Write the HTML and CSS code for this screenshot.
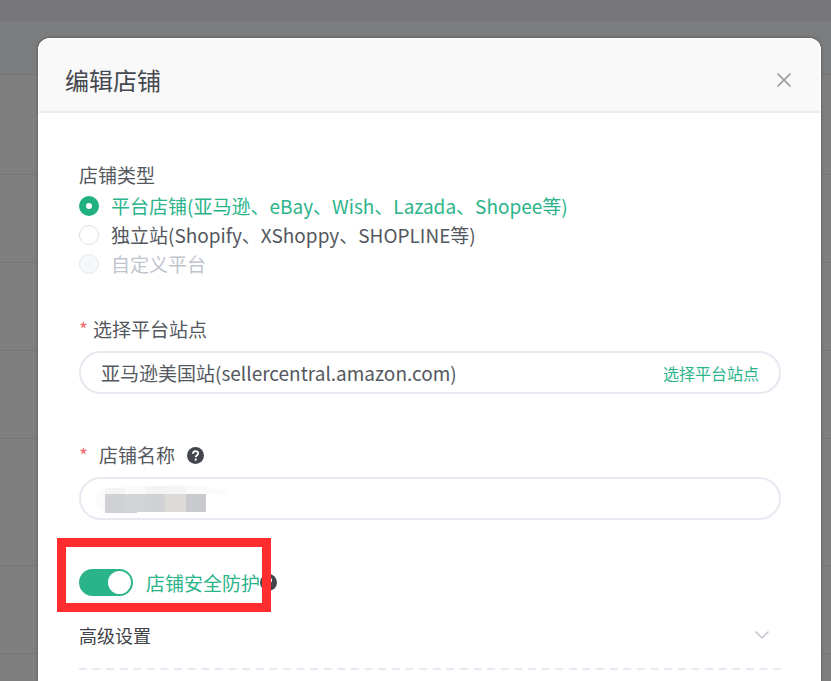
FILE: index.html
```html
<!DOCTYPE html>
<html lang="zh-CN">
<head>
    <meta charset="UTF-8">
    <meta name="viewport" content="width=device-width, initial-scale=1.0">
    <title>编辑店铺</title>
    <link rel="stylesheet" href="styles.css">
</head>
<body>
    <div class="page-behind" aria-hidden="true">
        <div class="topbar"></div>
        <div class="table-head"></div>
        <div class="row row-tall"></div>
        <div class="row"></div>
        <div class="row"></div>
        <div class="row"></div>
        <div class="row row-last"></div>
        <div class="row"></div>
    </div>

    <div class="dialog" role="dialog" aria-labelledby="dialog-title">
        <div class="dialog-header">
            <h1 id="dialog-title">编辑店铺</h1>
            <button type="button" class="close" aria-label="关闭">
                <svg width="16" height="16" viewBox="0 0 16 16" fill="none" stroke="#909399" stroke-width="1.5">
                    <path d="M1.5 1.5l13 13M14.5 1.5l-13 13"/>
                </svg>
            </button>
        </div>

        <form class="dialog-body">
            <fieldset class="shop-type">
                <legend>店铺类型</legend>
                <label class="radio checked">
                    <input type="radio" name="type" checked>
                    <span>平台店铺(亚马逊、eBay、Wish、Lazada、Shopee等)</span>
                </label>
                <label class="radio">
                    <input type="radio" name="type">
                    <span>独立站(Shopify、XShoppy、SHOPLINE等)</span>
                </label>
                <label class="radio disabled">
                    <input type="radio" name="type" disabled>
                    <span>自定义平台</span>
                </label>
            </fieldset>

            <div class="field">
                <div class="field-label">
                    <span class="star">*</span>
                    <label for="site">选择平台站点</label>
                </div>
                <div class="input-box">
                    <input type="text" id="site" value="亚马逊美国站(sellercentral.amazon.com)" readonly>
                    <button type="button" class="pick">选择平台站点</button>
                </div>
            </div>

            <div class="field">
                <div class="field-label name-label">
                    <span class="star">*</span>
                    <label for="name">店铺名称</label>
                    <svg class="help" width="17" height="17" viewBox="0 0 17 17">
                        <circle cx="8.5" cy="8.5" r="8.5" fill="#43474d"/>
                        <path d="M6 6.8c0-3.5 5.2-3.3 5.2-.3 0 1.9-2.5 1.8-2.5 3.8" fill="none" stroke="#fff" stroke-width="1.8"/>
                        <circle cx="8.7" cy="12.7" r="1.1" fill="#fff"/>
                    </svg>
                </div>
                <div class="input-box">
                    <input type="text" id="name">
                    <!-- 店铺名称打码 -->
                    <svg class="mosaic" width="136" height="30" viewBox="0 0 136 30">
                        <path d="M0 14Q2 3 28 2L90 0Q122 1 135 9H10V27Q2 24 0 14z" fill="#fafafa"/>
                        <path d="M10 3h20v6H10zM50 1h40v8H50z" fill="#f4f4f5"/>
                        <path d="M10 9h60v18H42v1H10z" fill="#d0d1d4"/>
                        <path d="M30 9h20v18H30z" fill="#d3d4d6"/>
                        <path d="M70 9h21v18H70z" fill="#dddbd8"/>
                        <path d="M91 9h20v18H91z" fill="#c9cace"/>
                    </svg>
                </div>
            </div>

            <div class="protect">
                <input type="checkbox" id="protect" class="switch" role="switch" checked>
                <label for="protect">店铺安全防护</label>
                <svg class="help" width="17" height="17" viewBox="0 0 17 17">
                    <circle cx="8.5" cy="8.5" r="8.5" fill="#43474d"/>
                    <path d="M6 6.8c0-3.5 5.2-3.3 5.2-.3 0 1.9-2.5 1.8-2.5 3.8" fill="none" stroke="#fff" stroke-width="1.8"/>
                    <circle cx="8.7" cy="12.7" r="1.1" fill="#fff"/>
                </svg>
                <div class="red-box"></div>
            </div>

            <button type="button" class="advanced">
                <span>高级设置</span>
                <svg width="16" height="10" viewBox="0 0 16 10" fill="none" stroke="#c0c4cc" stroke-width="1.5">
                    <path d="M1.5 1.5L8 8l6.5-6.5"/>
                </svg>
            </button>
            <div class="dashes"></div>
        </form>
    </div>
</body>
</html>
```
FILE: styles.css
```css
* {
    box-sizing: border-box;
}

body {
    display: flex;
    font-family: "Noto Sans CJK SC", sans-serif;
    font-size: 19px;
    color: #55585e;
    margin: 0;
    padding: 38px 10px 0 38px;
    min-height: 100vh;
    background-color: #7f7f7f;
}

input, button {
    font-family: inherit;
    font-size: inherit;
    color: inherit;
    margin: 0;
    padding: 0;
    border: none;
    background: none;
}

button {
    cursor: pointer;
}

/* 遮罩下的页面 */
.page-behind {
    position: absolute;
    inset: 0;
    overflow: hidden;
}

.topbar {
    height: 21px;
    background-color: #777779;
}

.table-head {
    height: 54px;
    background-color: #7b7c7e;
    border-bottom: 1px solid #757678;
}

.row {
    height: 88px;
    border-bottom: 1px solid #777778;
}

.row-tall {
    height: 100px;
}

.row-last {
    height: 127px;
}

/* 弹窗 */
.dialog {
    position: relative;
    flex: 1;
    min-width: 0;
    background-color: #fff;
    border-radius: 12px 12px 0 0;
    box-shadow: 0 0 3px rgba(0, 0, 0, 0.4);
}

.dialog-header {
    display: flex;
    align-items: center;
    justify-content: space-between;
    height: 75px;
    padding: 10px 28px 0 26px;
    background-color: #f9f9f9;
    border: 1px solid #fff;
    border-bottom: 2px solid #ebebf0;
    border-radius: 12px 12px 0 0;
}

h1 {
    margin: 0;
    font-size: 24px;
    font-weight: 400;
    line-height: 36px;
    color: #45484e;
}

.close {
    display: flex;
}

.dialog-body {
    padding: 47px 40px 0 41px;
}

.shop-type {
    margin: 0 0 36px;
    padding: 0;
    border: none;
}

legend {
    padding: 0;
    margin-bottom: 1px;
    line-height: 30px;
}

.radio {
    display: flex;
    align-items: center;
    gap: 12px;
    line-height: 29px;
}

.radio input {
    appearance: none;
    flex: none;
    width: 20px;
    height: 20px;
    border: 1px solid #dcdfe6;
    border-radius: 50%;
    background-color: #fff;
}

.radio input:checked {
    border: 7px solid #20b082;
}

.radio input:disabled {
    border-color: #e4e7ed;
    background-color: #f5f7fa;
}

.radio.checked {
    color: #2bb48a;
}

.radio.disabled {
    color: #c0c4cc;
}

.field {
    margin-bottom: 46px;
}

.field-label {
    display: flex;
    align-items: center;
    gap: 6px;
    margin-bottom: 7px;
    line-height: 30px;
}

.name-label {
    gap: 12px;
}

.star {
    width: 8px;
    color: #f56c6c;
}

.input-box {
    position: relative;
    display: flex;
    align-items: center;
    height: 43px;
    padding: 0 20px;
    border: 2px solid #e8e8f0;
    border-radius: 22px;
}

.input-box input {
    flex: 1;
    min-width: 0;
    outline: none;
}

.pick {
    font-size: 16px;
    color: #2bb48a;
}

.mosaic {
    position: absolute;
    left: 14px;
    top: 6px;
}

.protect {
    position: relative;
    display: flex;
    align-items: center;
    height: 28px;
    margin-top: 48px;
    color: #2bb48a;
}

.protect label {
    margin-left: 13px;
}

.switch {
    appearance: none;
    width: 54px;
    height: 27px;
    padding: 2px;
    border-radius: 14px;
    background-color: #2bb48a;
}

.switch::before {
    content: "";
    display: block;
    width: 23px;
    height: 23px;
    border-radius: 50%;
    background-color: #fff;
}

.switch:checked::before {
    margin-left: auto;
}

/* 红框标注 */
.red-box {
    position: absolute;
    left: -22px;
    top: -30px;
    width: 214px;
    height: 74px;
    border: 9px solid #ff2d2d;
}

.advanced {
    display: flex;
    align-items: center;
    justify-content: space-between;
    width: 100%;
    margin-top: 24px;
    padding-right: 11px;
    font-size: 18px;
    line-height: 30px;
    color: #404348;
}

.dashes {
    height: 2px;
    margin-top: 18px;
    background-image: linear-gradient(to right, #e6e8f2 8px, transparent 8px);
    background-size: calc((100% + 6px) / 52) 2px;
}
```
